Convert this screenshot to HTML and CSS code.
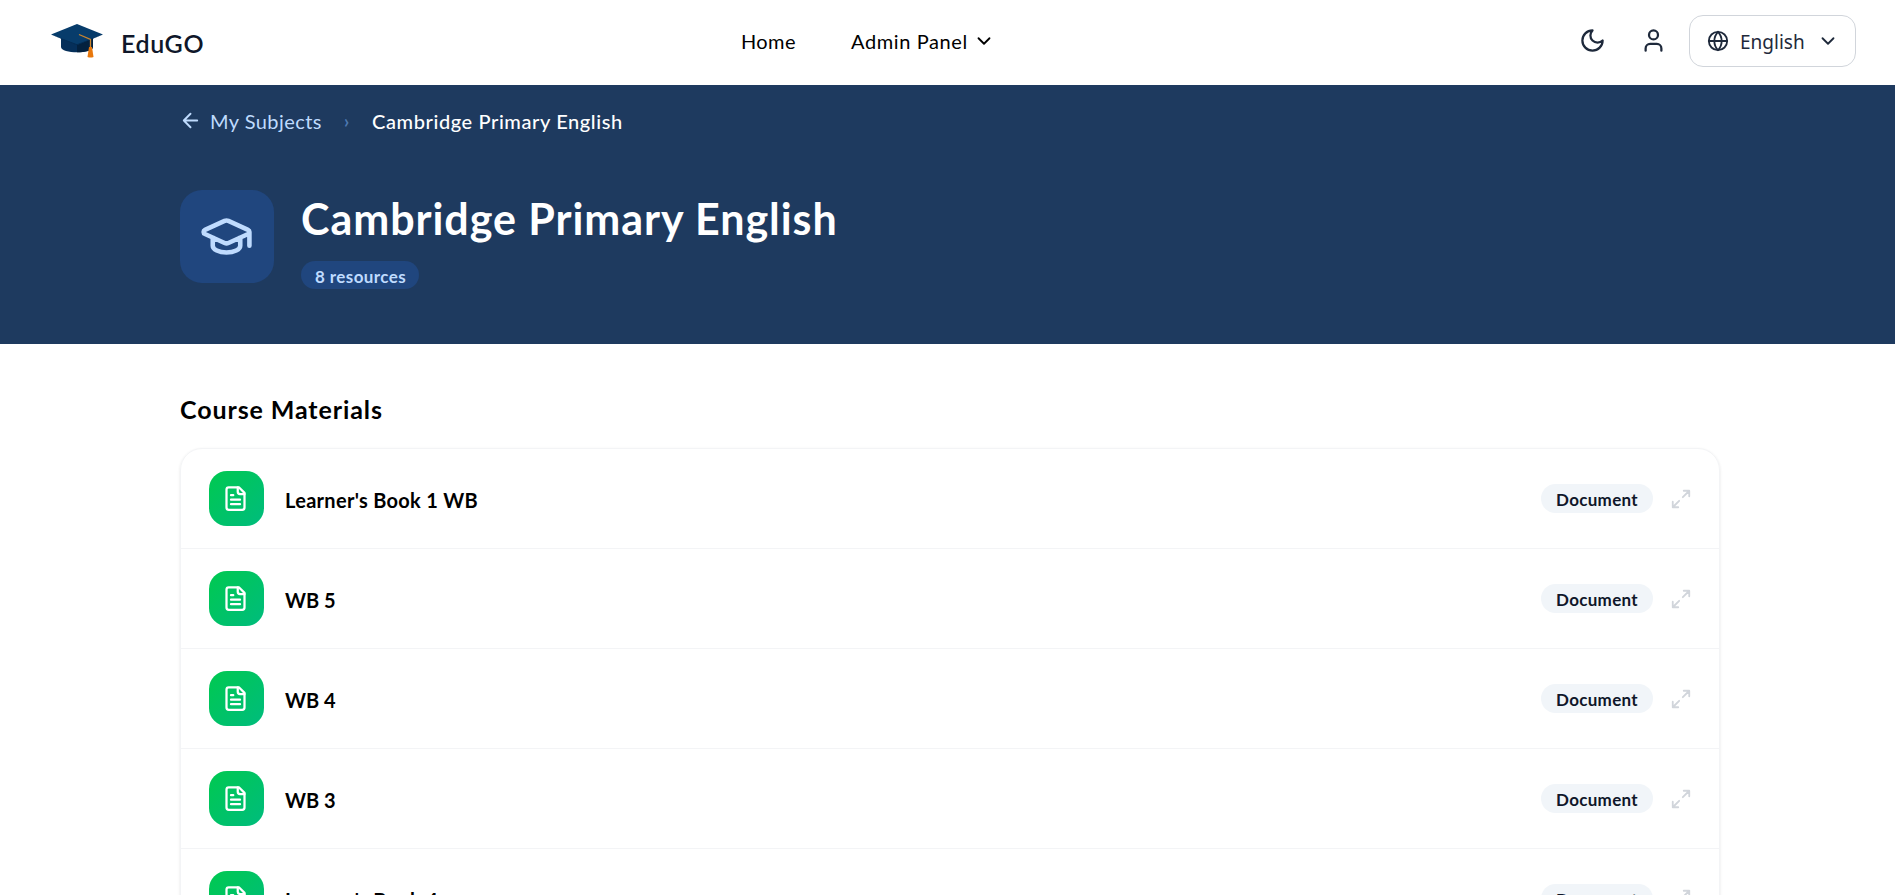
FILE: index.html
```html
<!DOCTYPE html>
<html lang="en">
<head>
    <meta charset="UTF-8">
    <meta name="viewport" content="width=device-width, initial-scale=1.0">
    <title>EduGO - Cambridge Primary English</title>
    <link rel="stylesheet" href="styles.css">
</head>
<body>
    <!-- Shared icons -->
    <svg class="sprite" xmlns="http://www.w3.org/2000/svg">
        <symbol id="chevron" viewBox="0 0 24 24"><path d="m6 9 6 6 6-6"/></symbol>
        <symbol id="file" viewBox="0 0 24 24">
            <path d="M15 2H6a2 2 0 0 0-2 2v16a2 2 0 0 0 2 2h12a2 2 0 0 0 2-2V7Z"/>
            <path d="M14 2v4a2 2 0 0 0 2 2h4M10 9H8M16 13H8M16 17H8"/>
        </symbol>
        <symbol id="expand" viewBox="0 0 24 24"><path d="M15 3h6v6M9 21H3v-6M21 3l-7 7M3 21l7-7"/></symbol>
    </svg>

    <header class="header">
        <div class="logo">
            <svg class="logo-icon" viewBox="0 0 54 36">
                <path d="M11 14v10c0 7 32 7 32 0V14Z" fill="#052f5a"/>
                <path d="M27 21v8.300c8 0 16-1.500 16-5.300V14Z" fill="#03213f"/>
                <path d="M27 1 1 11.500 27 22 53 11.500Z" fill="#073c6b"/>
                <path d="M1 11.500 27 21.300 53 11.500 27 22.300Z" fill="#042a50"/>
                <path d="m29 11.500 11.500 5V28" fill="none" stroke="#c9852f" stroke-width="1.300"/>
                <path d="M39 24h3l1.500 10q-3 1.200-6 0Z" fill="#e8780c"/>
            </svg>
            <span class="logo-text">EduGO</span>
        </div>
        <nav class="nav">
            <a class="nav-home">Home</a>
            <a class="nav-admin">Admin Panel</a>
            <svg class="icon chevron"><use href="#chevron"/></svg>
        </nav>
        <div class="actions">
            <svg class="icon action-icon" viewBox="0 0 24 24"><path d="M12 3a6 6 0 0 0 9 9 9 9 0 1 1-9-9Z"/></svg>
            <svg class="icon action-icon" viewBox="0 0 24 24"><path d="M19 21v-2a4 4 0 0 0-4-4H9a4 4 0 0 0-4 4v2"/><circle cx="12" cy="7" r="4"/></svg>
            <button class="language">
                <svg class="icon globe" viewBox="0 0 24 24"><circle cx="12" cy="12" r="10"/><path d="M12 2a14.500 14.500 0 0 0 0 20 14.500 14.500 0 0 0 0-20M2 12h20"/></svg>
                <span class="language-text">English</span>
                <svg class="icon chevron"><use href="#chevron"/></svg>
            </button>
        </div>
    </header>

    <section class="hero">
        <div class="breadcrumb">
            <svg class="icon back" viewBox="0 0 24 24"><path d="m12 19-7-7 7-7M19 12H5"/></svg>
            <a class="crumb-link">My Subjects</a>
            <span class="separator">›</span>
            <span class="crumb-current">Cambridge Primary English</span>
        </div>
        <div class="subject">
            <div class="subject-icon">
                <svg class="icon" viewBox="0 0 24 24"><path d="M21.420 10.922a1 1 0 0 0-.019-1.838L12.830 5.180a2 2 0 0 0-1.660 0L2.600 9.080a1 1 0 0 0 0 1.832l8.570 3.908a2 2 0 0 0 1.660 0zM22 10v6M6 12.500V16a6 3 0 0 0 12 0v-3.500"/></svg>
            </div>
            <div class="subject-info">
                <h1>Cambridge Primary English</h1>
                <span class="count">8 resources</span>
            </div>
        </div>
    </section>

    <main class="content">
        <h2>Course Materials</h2>
        <div class="materials">
            <div class="row">
                <div class="file-icon"><svg class="icon"><use href="#file"/></svg></div>
                <span class="name name-long">Learner's Book 1 WB</span>
                <span class="tag">Document</span>
                <svg class="icon expand"><use href="#expand"/></svg>
            </div>
            <div class="row">
                <div class="file-icon"><svg class="icon"><use href="#file"/></svg></div>
                <span class="name">WB 5</span>
                <span class="tag">Document</span>
                <svg class="icon expand"><use href="#expand"/></svg>
            </div>
            <div class="row">
                <div class="file-icon"><svg class="icon"><use href="#file"/></svg></div>
                <span class="name">WB 4</span>
                <span class="tag">Document</span>
                <svg class="icon expand"><use href="#expand"/></svg>
            </div>
            <div class="row">
                <div class="file-icon"><svg class="icon"><use href="#file"/></svg></div>
                <span class="name">WB 3</span>
                <span class="tag">Document</span>
                <svg class="icon expand"><use href="#expand"/></svg>
            </div>
            <div class="row">
                <div class="file-icon"><svg class="icon"><use href="#file"/></svg></div>
                <span class="name name-long">Learner's Book 4</span>
                <span class="tag">Document</span>
                <svg class="icon expand"><use href="#expand"/></svg>
            </div>
        </div>
    </main>
</body>
</html>
```
FILE: styles.css
```css
* {
    box-sizing: border-box;
}

body {
    margin: 0;
    height: 100vh;
    overflow: hidden;
    font-family: Lato, "Open Sans", sans-serif;
    background-color: #fff;
    color: #000;
}

h1, h2 {
    margin: 0;
}

.sprite {
    display: none;
}

.icon {
    flex: none;
    fill: none;
    stroke: currentColor;
    stroke-width: 2;
    stroke-linecap: round;
    stroke-linejoin: round;
}

/* Header */
.header {
    display: flex;
    align-items: center;
    height: 85px;
    padding: 0 39px 3px 50px;
}

.logo {
    display: flex;
    align-items: center;
    width: 691px;
}

.logo-icon {
    width: 54px;
    height: 36px;
}

.logo-text {
    margin: 3px 0 0 17px;
    font-size: 25px;
    line-height: 30px;
    font-weight: 600;
    letter-spacing: 0.6px;
    color: #0f172a;
}

.nav {
    display: flex;
    align-items: center;
    font-size: 20px;
    line-height: 24px;
}

.nav-home {
    width: 110px;
    letter-spacing: 0.4px;
}

.nav-admin {
    width: 122px;
    letter-spacing: 0.6px;
}

.chevron {
    width: 22px;
    height: 22px;
}

.nav .chevron {
    margin-bottom: 1px;
}

.actions {
    display: flex;
    align-items: center;
    margin-left: auto;
    color: #1e293b;
}

.action-icon {
    width: 27px;
    height: 27px;
    margin: 0 34px 1px 0;
}

.action-icon + .action-icon {
    margin-right: 22px;
}

.language {
    display: flex;
    align-items: center;
    width: 167px;
    height: 52px;
    padding: 0 15px 0 17px;
    border: 1px solid #d1d5db;
    border-radius: 14px;
    background: #fff;
    color: #1e293b;
    font-family: "Noto Sans", sans-serif;
    font-size: 19px;
}

.globe {
    width: 22px;
    height: 22px;
}

.language-text {
    width: 77px;
    margin-left: 11px;
    padding-top: 1px;
    text-align: left;
}

/* Subject banner */
.hero {
    height: 259px;
    padding: 21px 175px 0 180px;
    background-color: #1e3a5f;
}

.breadcrumb {
    display: flex;
    align-items: center;
    height: 30px;
    font-size: 20px;
    line-height: 24px;
    color: #bfdbfe;
}

.back {
    width: 23px;
    height: 23px;
    margin: 0 8px 1px -1px;
}

.crumb-link {
    width: 134px;
    letter-spacing: 0.45px;
}

.separator {
    width: 28px;
    font-size: 18px;
    font-weight: 700;
    color: #4d78b0;
}

.crumb-current {
    color: #fff;
    font-weight: 500;
    letter-spacing: 0.6px;
}

.subject {
    display: flex;
    margin-top: 54px;
}

.subject-icon {
    display: flex;
    align-items: center;
    justify-content: center;
    width: 94px;
    height: 93px;
    padding-right: 1px;
    border-radius: 22px;
    background-color: #20467e;
    color: #bfdbfe;
}

.subject-icon .icon {
    width: 55px;
    height: 55px;
}

.subject-info {
    display: flex;
    flex-direction: column;
    align-items: flex-start;
    margin-left: 27px;
}

h1 {
    height: 71px;
    padding-top: 3px;
    font-size: 43px;
    line-height: 52px;
    font-weight: 700;
    letter-spacing: 0.95px;
    color: #fff;
}

.count {
    display: flex;
    align-items: center;
    width: 118px;
    height: 28px;
    padding: 2px 0 0 14px;
    border-radius: 14px;
    background-color: #20467e;
    color: #bfdbfe;
    font-size: 17px;
    font-weight: 700;
    letter-spacing: 0.4px;
}

/* Materials list */
.content {
    padding: 49px 175px 0 180px;
}

h2 {
    height: 55px;
    font-size: 25px;
    line-height: 32px;
    font-weight: 700;
    letter-spacing: 0.9px;
}

.materials {
    border: 1px solid #f3f4f6;
    border-radius: 22px;
    box-shadow: 0 1px 3px rgba(0, 0, 0, 0.1);
}

.row {
    display: flex;
    align-items: center;
    height: 100px;
    padding: 0 27px 0 28px;
    border-bottom: 1px solid #f3f4f6;
}

.file-icon {
    display: flex;
    align-items: center;
    justify-content: center;
    width: 55px;
    height: 55px;
    padding-right: 2px;
    border-radius: 18px;
    background: linear-gradient(135deg, #00c950, #00bc7d);
    color: #fff;
}

.file-icon .icon {
    width: 27px;
    height: 27px;
}

.name {
    flex: 1;
    margin-left: 21px;
    padding-top: 3px;
    font-size: 20px;
    line-height: 24px;
    font-weight: 700;
}

.name-long {
    letter-spacing: 0.3px;
}

.tag {
    display: flex;
    align-items: center;
    justify-content: center;
    width: 112px;
    height: 29px;
    padding-top: 2px;
    border-radius: 15px;
    background-color: #f1f5f9;
    color: #0f172a;
    font-size: 17px;
    font-weight: 700;
    letter-spacing: 0.3px;
}

.expand {
    width: 22px;
    height: 22px;
    margin-left: 17px;
    color: #d1d5db;
}
```
